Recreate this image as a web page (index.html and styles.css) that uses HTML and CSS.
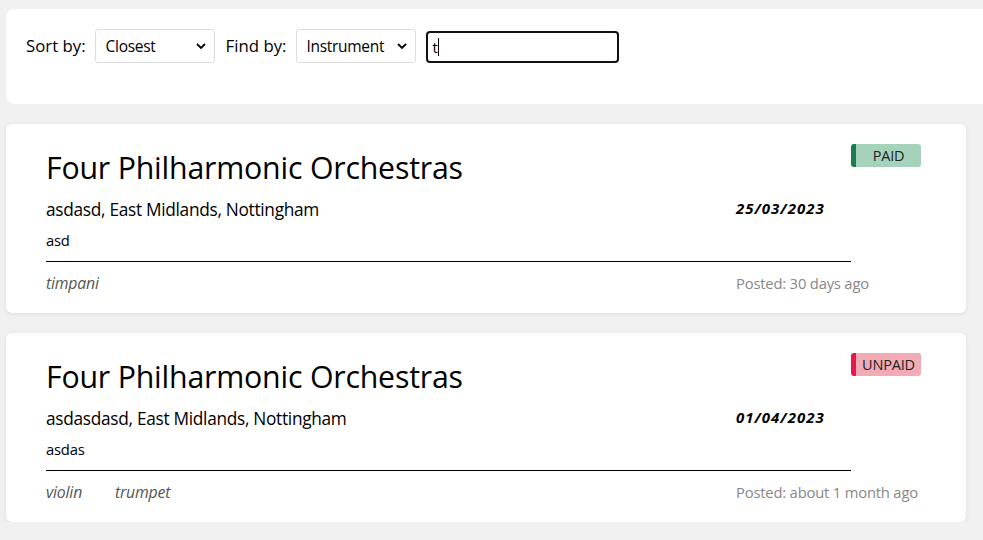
FILE: index.html
```html
<!DOCTYPE html>
<html>
<head>
<meta charset="utf-8">
<link rel="stylesheet" href="styles.css">
</head>
<body>
<div class="page">
  <div class="filters">
    <label class="lbl">Sort by:</label>
    <div class="select"><span>Closest</span><svg class="chev" viewBox="0 0 10 6" width="10" height="6"><path d="M1 1l4 4 4-4" fill="none" stroke="#000" stroke-width="1.8"/></svg></div>
    <label class="lbl">Find by:</label>
    <div class="select"><span>Instrument</span><svg class="chev" viewBox="0 0 10 6" width="10" height="6"><path d="M1 1l4 4 4-4" fill="none" stroke="#000" stroke-width="1.8"/></svg></div>
    <div class="search"><span>t</span><span class="caret"></span></div>
  </div>

  <div class="card">
    <div class="main">
      <h2 class="title">Four Philharmonic Orchestras</h2>
      <div class="row">
        <div class="loc">asdasd, East Midlands, Nottingham</div>
        <div class="date">25/03/2023</div>
      </div>
      <div class="desc">asd</div>
      <div class="rule"></div>
      <div class="row foot">
        <div class="instr"><span>timpani</span></div>
        <div class="posted">Posted: 30 days ago</div>
      </div>
    </div>
    <div class="badge paid">PAID</div>
  </div>

  <div class="card">
    <div class="main">
      <h2 class="title">Four Philharmonic Orchestras</h2>
      <div class="row">
        <div class="loc">asdasdasd, East Midlands, Nottingham</div>
        <div class="date">01/04/2023</div>
      </div>
      <div class="desc">asdas</div>
      <div class="rule"></div>
      <div class="row foot">
        <div class="instr"><span>violin</span><span>trumpet</span></div>
        <div class="posted">Posted: about 1 month ago</div>
      </div>
    </div>
    <div class="badge unpaid">UNPAID</div>
  </div>
</div>
</body>
</html>
```
FILE: styles.css
```css
html, body {
  margin: 0;
  padding: 0;
  background: #f0f0f0;
  overflow: hidden;
  font-family: "Open Sans", "Noto Sans", sans-serif;
  color: #000;
}
.page {
  padding: 9px 0 0 6px;
  display: flex;
  flex-direction: column;
  gap: 20px;
  width: 1010px;
}
.filters {
  background: #fff;
  border-radius: 8px;
  height: 95px;
  box-sizing: border-box;
  padding: 20px 20px 0 20px;
  display: flex;
  align-items: flex-start;
}
.lbl {
  font-size: 16.8px;
  line-height: 34px;
  margin-right: 9px;
}
.select {
  width: 120px;
  height: 34px;
  box-sizing: border-box;
  border: 1px solid #dcdcdc;
  border-radius: 3px;
  display: flex;
  align-items: center;
  justify-content: space-between;
  padding: 0 8px 0 10px;
  font-size: 15.5px;
  letter-spacing: -0.3px;
  margin-right: 11px;
}
.search {
  margin-top: 2px;
  margin-left: -1px;
  width: 193px;
  height: 32px;
  box-sizing: border-box;
  border: 2px solid #111;
  border-radius: 4px;
  display: flex;
  align-items: center;
  padding-left: 5px;
  font-size: 15px;
}
.caret {
  display: inline-block;
  width: 1px;
  height: 18px;
  background: #000;
}
.card {
  width: 960px;
  height: 189px;
  box-sizing: border-box;
  background: #fff;
  border-radius: 6px;
  box-shadow: 0 1px 4px rgba(0,0,0,0.08);
  padding: 20px 45px 0 40px;
  display: flex;
  align-items: flex-start;
}
.main {
  width: 805px;
  flex: 0 0 805px;
}
.title {
  margin: 2px 0 0;
  font-weight: 400;
  font-size: 30.3px;
  line-height: 44px;
  letter-spacing: -0.2px;
}
.row {
  display: grid;
  grid-template-columns: 690px 1fr;
  align-items: center;
}
.loc {
  font-size: 17.3px;
  line-height: 32px;
  letter-spacing: -0.3px;
  margin-top: 4px;
}
.date {
  font-weight: 700;
  font-style: italic;
  font-size: 15px;
  letter-spacing: 1px;
}
.desc {
  font-size: 14.8px;
  line-height: 30px;
  letter-spacing: -0.2px;
  margin-top: -1px;
}
.rule {
  height: 1px;
  background: #000;
  margin-top: 6px;
}
.foot {
  height: 41px;
  white-space: nowrap;
}
.instr {
  display: flex;
  gap: 33px;
  font-style: italic;
  font-size: 15.8px;
  color: #555;
  letter-spacing: -0.2px;
}
.posted {
  font-size: 14.8px;
  color: #888;
  letter-spacing: -0.2px;
}
.badge {
  flex: 0 0 70px;
  height: 23px;
  box-sizing: border-box;
  border-radius: 3px;
  border-left: 5px solid;
  display: flex;
  align-items: center;
  justify-content: center;
  font-size: 14.5px;
  letter-spacing: -0.2px;
  color: #222;
}
.paid {
  background: #a5d2bb;
  border-left-color: #1c7c4f;
}
.unpaid {
  background: #f2abb5;
  border-left-color: #e5184e;
}
```
